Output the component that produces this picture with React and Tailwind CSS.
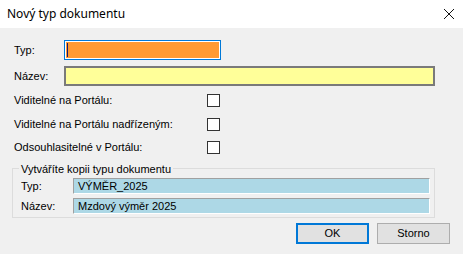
import React from "react";

const font = { fontFamily: '"Liberation Sans", Arial, sans-serif' };

function Checkbox() {
  return <div className="h-[13px] w-[13px] border border-[#333333] bg-white" />;
}

function CheckRow({ label, className }) {
  return (
    <div className={"flex h-[13px] items-center " + className}>
      <span className="w-[195px] pl-[2px] text-[11px] leading-[13px] text-black">{label}</span>
      <Checkbox />
    </div>
  );
}

function CopyField({ label, value, className }) {
  return (
    <div className={"flex items-center " + className}>
      <span className="w-[60px] pl-[8px] text-[11px] text-black">{label}</span>
      <div className="flex h-[16px] w-[357px] items-center border-t border-l border-t-[#a0a0a0] border-l-[#a0a0a0] border-r border-b border-r-white border-b-white bg-[#add8e6] pl-[4px] text-[11px] text-black">
        {value}
      </div>
    </div>
  );
}

export default function App() {
  return (
    <div className="flex h-[254px] w-[463px] flex-col bg-[#f0f0f0]" style={font}>
      <div className="flex h-[28px] items-center justify-between bg-white pl-[7px] pr-[7px]">
        <span className="text-[12px] text-black" style={{ fontFamily: '"Noto Sans", sans-serif' }}>
          Nový typ dokumentu
        </span>
        <svg width="12" height="12" viewBox="0 0 12 12" className="mr-[1px]">
          <path d="M1 1 L11 11 M11 1 L1 11" stroke="#111" strokeWidth="1" />
        </svg>
      </div>

      <div className="flex flex-col px-[12px]">
        <div className="mt-[12px] flex h-[20px] items-center">
          <span className="w-[52px] pl-[2px] text-[11px] text-black">Typ:</span>
          <div className="h-[20px] w-[157px] border border-[#0078d7] bg-white p-[1px]">
            <div className="relative h-full w-full bg-[#ff9a33]">
              <div className="absolute left-[1px] top-[1px] h-[14px] w-[1px] bg-[#1a1a6e]" />
            </div>
          </div>
        </div>
        <div className="mt-[6px] flex h-[20px] items-center">
          <span className="w-[52px] pl-[2px] text-[11px] text-black">Název:</span>
          <div className="h-[20px] w-[371px] border-2 border-[#7a7a7a] bg-[#ffff99]" />
        </div>

        <CheckRow label="Viditelné na Portálu:" className="mt-[8px]" />
        <CheckRow label="Viditelné na Portálu nadřízeným:" className="mt-[11px]" />
        <CheckRow label="Odsouhlasitelné v Portálu:" className="mt-[10px]" />

        <div className="relative mt-[14px] h-[50px] w-[423px] border border-[#dcdcdc] pt-[9px]">
          <span className="absolute left-[6px] top-[-8px] bg-[#f0f0f0] px-[2px] text-[11px] text-black">
            Vytváříte kopii typu dokumentu
          </span>
          <CopyField label="Typ:" value="VÝMĚR_2025" />
          <CopyField label="Název:" value="Mzdový výměr 2025" className="mt-[3px]" />
        </div>

        <div className="mt-[5px] flex justify-end gap-[8px] pr-[1px]">
          <button className="h-[21px] w-[73px] border-2 border-[#0078d7] bg-[#e1e1e1] text-[11px] text-black">
            OK
          </button>
          <button className="h-[21px] w-[73px] border border-[#adadad] bg-[#e1e1e1] text-[11px] text-black">
            Storno
          </button>
        </div>
      </div>
    </div>
  );
}
